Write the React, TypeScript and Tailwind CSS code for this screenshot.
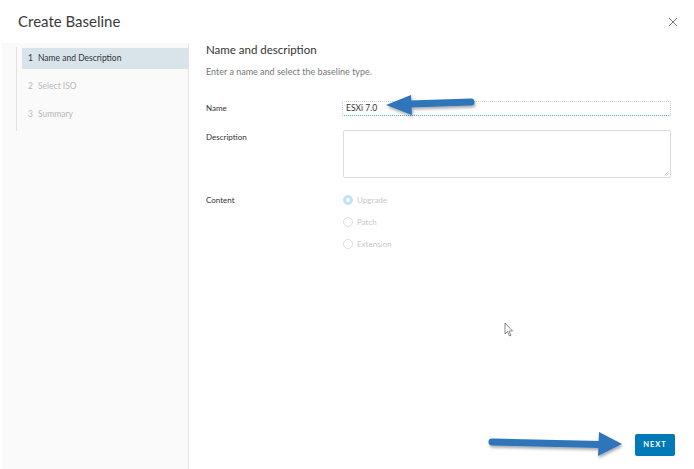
import React from 'react';

const steps = ['Name and Description', 'Select ISO', 'Summary'];

const Radio: React.FC<{ label: string; checked?: boolean }> = ({ label, checked }) => (
  <div className="flex items-center h-[22px] gap-[4px]">
    <span
      className={`w-[10px] h-[10px] rounded-full border ${checked ? 'border-[#bfe3f5] bg-[#bfe3f5] flex items-center justify-center' : 'border-[#dcdcdc] bg-white'}`}
    >
      {checked && <span className="w-[4px] h-[4px] rounded-full bg-white" />}
    </span>
    <span className="text-[8px] text-[#c8c8c8]">{label}</span>
  </div>
);

export default function App() {
  return (
    <div
      className="relative w-[694px] h-[469px] bg-white flex flex-col overflow-hidden"
      style={{ fontFamily: 'Lato, "Open Sans", sans-serif' }}
    >
      <div className="h-[43px] shrink-0 flex items-center justify-between pl-[18px] pr-[15px]">
        <h1 className="text-[15px] text-[#3a3a3a] font-normal">Create Baseline</h1>
        <svg width="10" height="10" viewBox="0 0 10 10" className="mr-[1px]">
          <path d="M1 1 L9 9 M9 1 L1 9" stroke="#777" strokeWidth="1" />
        </svg>
      </div>

      <div className="flex flex-1 min-h-0">
        <aside className="w-[187px] ml-[2px] bg-[#fafafa] border-r border-[#e4e4e4] pl-[14px] pt-[4px] shrink-0">
          <ul className="border-l border-[#e2e2e2] pl-[5px] h-[84px] pt-[1px] flex flex-col gap-[7px]">
            {steps.map((s, i) => (
              <li
                key={s}
                className={`h-[21px] flex items-center pl-[6px] text-[8.5px] ${i === 0 ? 'bg-[#d9e4ea] text-[#333]' : 'text-[#b8b8b8]'}`}
              >
                <span className="w-[10px]">{i + 1}</span>
                {s}
              </li>
            ))}
          </ul>
        </aside>

        <main className="flex-1 flex flex-col pl-[17px] pr-[19px] pb-[13px]">
          <h2 className="text-[11.5px] text-[#333] leading-[16px] mt-[-1px]">Name and description</h2>
          <p className="text-[9px] text-[#777] mt-[7px]">Enter a name and select the baseline type.</p>

          <div className="grid grid-cols-[136px_1fr] mt-[21px] mr-[4px] items-start">
            <label className="text-[8px] text-[#333] h-[15px] flex items-center mt-[1px]">Name</label>
            <div className="h-[15px] mt-[1px] border border-dotted border-[#cfcfcf] border-b-[#49afd9] border-b flex items-center pl-[3px] text-[8.5px] text-[#333]">
              ESXi 7.0
            </div>

            <label className="text-[8px] text-[#333] mt-[14px] pt-[1px]">Description</label>
            <div className="mt-[14px] ml-[1px] h-[48px] border border-[#dcdcdc] rounded-[2px] relative">
              <svg width="5" height="5" viewBox="0 0 5 5" className="absolute right-[1px] bottom-[1px]">
                <path d="M4.5 0.5 L0.5 4.5 M4.5 2.5 L2.5 4.5" stroke="#aaa" strokeWidth="0.6" />
              </svg>
            </div>

            <label className="text-[8px] text-[#333] mt-[14px] pt-[2px]">Content</label>
            <div className="mt-[11px] ml-[1px] flex flex-col">
              <Radio label="Upgrade" checked />
              <Radio label="Patch" />
              <Radio label="Extension" />
            </div>
          </div>

          <div className="flex-1" />
          <div className="flex justify-end">
            <button className="w-[40px] h-[22px] bg-[#0079b8] text-white text-[7.5px] font-bold tracking-[1px] rounded-[2px]">
              NEXT
            </button>
          </div>
        </main>
      </div>

      {/* annotation arrows */}
      <svg className="absolute left-0 top-0 pointer-events-none" width="694" height="469">
        <defs>
          <filter id="sh" x="-10%" y="-50%" width="130%" height="200%">
            <feDropShadow dx="1" dy="2" stdDeviation="1.5" floodColor="#000" floodOpacity="0.35" />
          </filter>
        </defs>
        <g filter="url(#sh)" fill="#2e74ba" stroke="#2e74ba">
          <line x1="410" y1="104" x2="471" y2="102" strokeWidth="7" strokeLinecap="round" />
          <polygon points="386,105 411,95 412,115" stroke="none" />
          <line x1="492" y1="442" x2="600" y2="444.5" strokeWidth="7" strokeLinecap="round" />
          <polygon points="622,444 599,432 598,456" stroke="none" />
        </g>
        {/* mouse cursor */}
        <path
          d="M505 323 L505 334 L507.5 331.5 L509.5 336 L511 335.3 L509 331 L512.5 331 Z"
          fill="#fff"
          stroke="#555"
          strokeWidth="0.7"
        />
      </svg>
    </div>
  );
}
